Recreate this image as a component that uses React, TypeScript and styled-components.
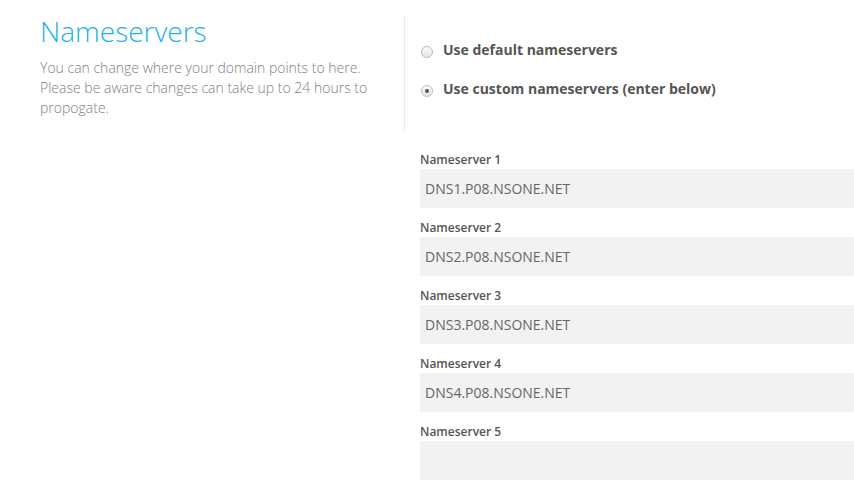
import { createGlobalStyle, styled } from 'styled-components';

const GlobalStyle = createGlobalStyle`
  html, body {
    margin: 0;
    padding: 0;
    background: #ffffff;
  }
  body {
    font-family: 'Open Sans', 'Liberation Sans', sans-serif;
    overflow: hidden;
  }
`;

const servers = [
  'DNS1.P08.NSONE.NET',
  'DNS2.P08.NSONE.NET',
  'DNS3.P08.NSONE.NET',
  'DNS4.P08.NSONE.NET',
  '',
];

export default function App() {
  return (
    <>
      <GlobalStyle />
      <Page>
        <TopRow>
          <Intro>
            <Title>Nameservers</Title>
            <Description>
              You can change where your domain points to here. Please be aware changes can take up
              to 24 hours to propogate.
            </Description>
          </Intro>
          <Options>
            <RadioRow>
              <Radio type="radio" name="ns" />
              Use default nameservers
            </RadioRow>
            <RadioRow>
              <Radio type="radio" name="ns" defaultChecked />
              Use custom nameservers (enter below)
            </RadioRow>
          </Options>
        </TopRow>
        <Fields>
          {servers.map((value, i) => (
            <Field key={i}>
              <Label>Nameserver {i + 1}</Label>
              <TextInput defaultValue={value} />
            </Field>
          ))}
        </Fields>
      </Page>
    </>
  );
}

const Page = styled.div`
  padding: 15px 0 0 40px;
`;

const TopRow = styled.div`
  display: flex;
`;

const Intro = styled.div`
  width: 364px;
  flex-shrink: 0;
`;

const Title = styled.h1`
  margin: 0;
  font-size: 28px;
  font-weight: 300;
  line-height: 32px;
  color: #1fb1ee;
`;

const Description = styled.p`
  margin: 11px 0 0;
  width: 340px;
  font-size: 14px;
  font-weight: 300;
  line-height: 20px;
  color: #808080;
`;

const Options = styled.div`
  display: flex;
  flex-direction: column;
  gap: 19px;
  height: 116px;
  padding: 25px 0 0 16px;
  box-sizing: border-box;
  border-left: 1px solid #ececec;
`;

const RadioRow = styled.label`
  display: flex;
  align-items: center;
  gap: 10px;
  font-size: 14px;
  font-weight: 700;
  line-height: 20px;
  color: #555555;
`;

const Radio = styled.input`
  appearance: none;
  margin: 3px 0 0;
  width: 12px;
  height: 12px;
  border-radius: 50%;
  border: 1px solid #bdbdbd;
  background: linear-gradient(#fafafa, #e6e6e6);
  box-sizing: border-box;
  display: grid;
  place-items: center;

  &:checked::after {
    content: '';
    width: 4px;
    height: 4px;
    border-radius: 50%;
    background: #555555;
  }
`;

const Fields = styled.div`
  display: flex;
  flex-direction: column;
  gap: 10px;
  margin: 19px 0 0 380px;
`;

const Field = styled.div`
  display: flex;
  flex-direction: column;
`;

const Label = styled.span`
  padding-top: 1px;
  font-size: 12px;
  font-weight: 600;
  line-height: 18px;
  color: #555555;
`;

const TextInput = styled.input`
  height: 39px;
  padding: 0 5px;
  border: none;
  outline: none;
  background: #f2f2f2;
  font-family: 'Open Sans', 'Liberation Sans', sans-serif;
  font-size: 14px;
  color: #666666;
`;
